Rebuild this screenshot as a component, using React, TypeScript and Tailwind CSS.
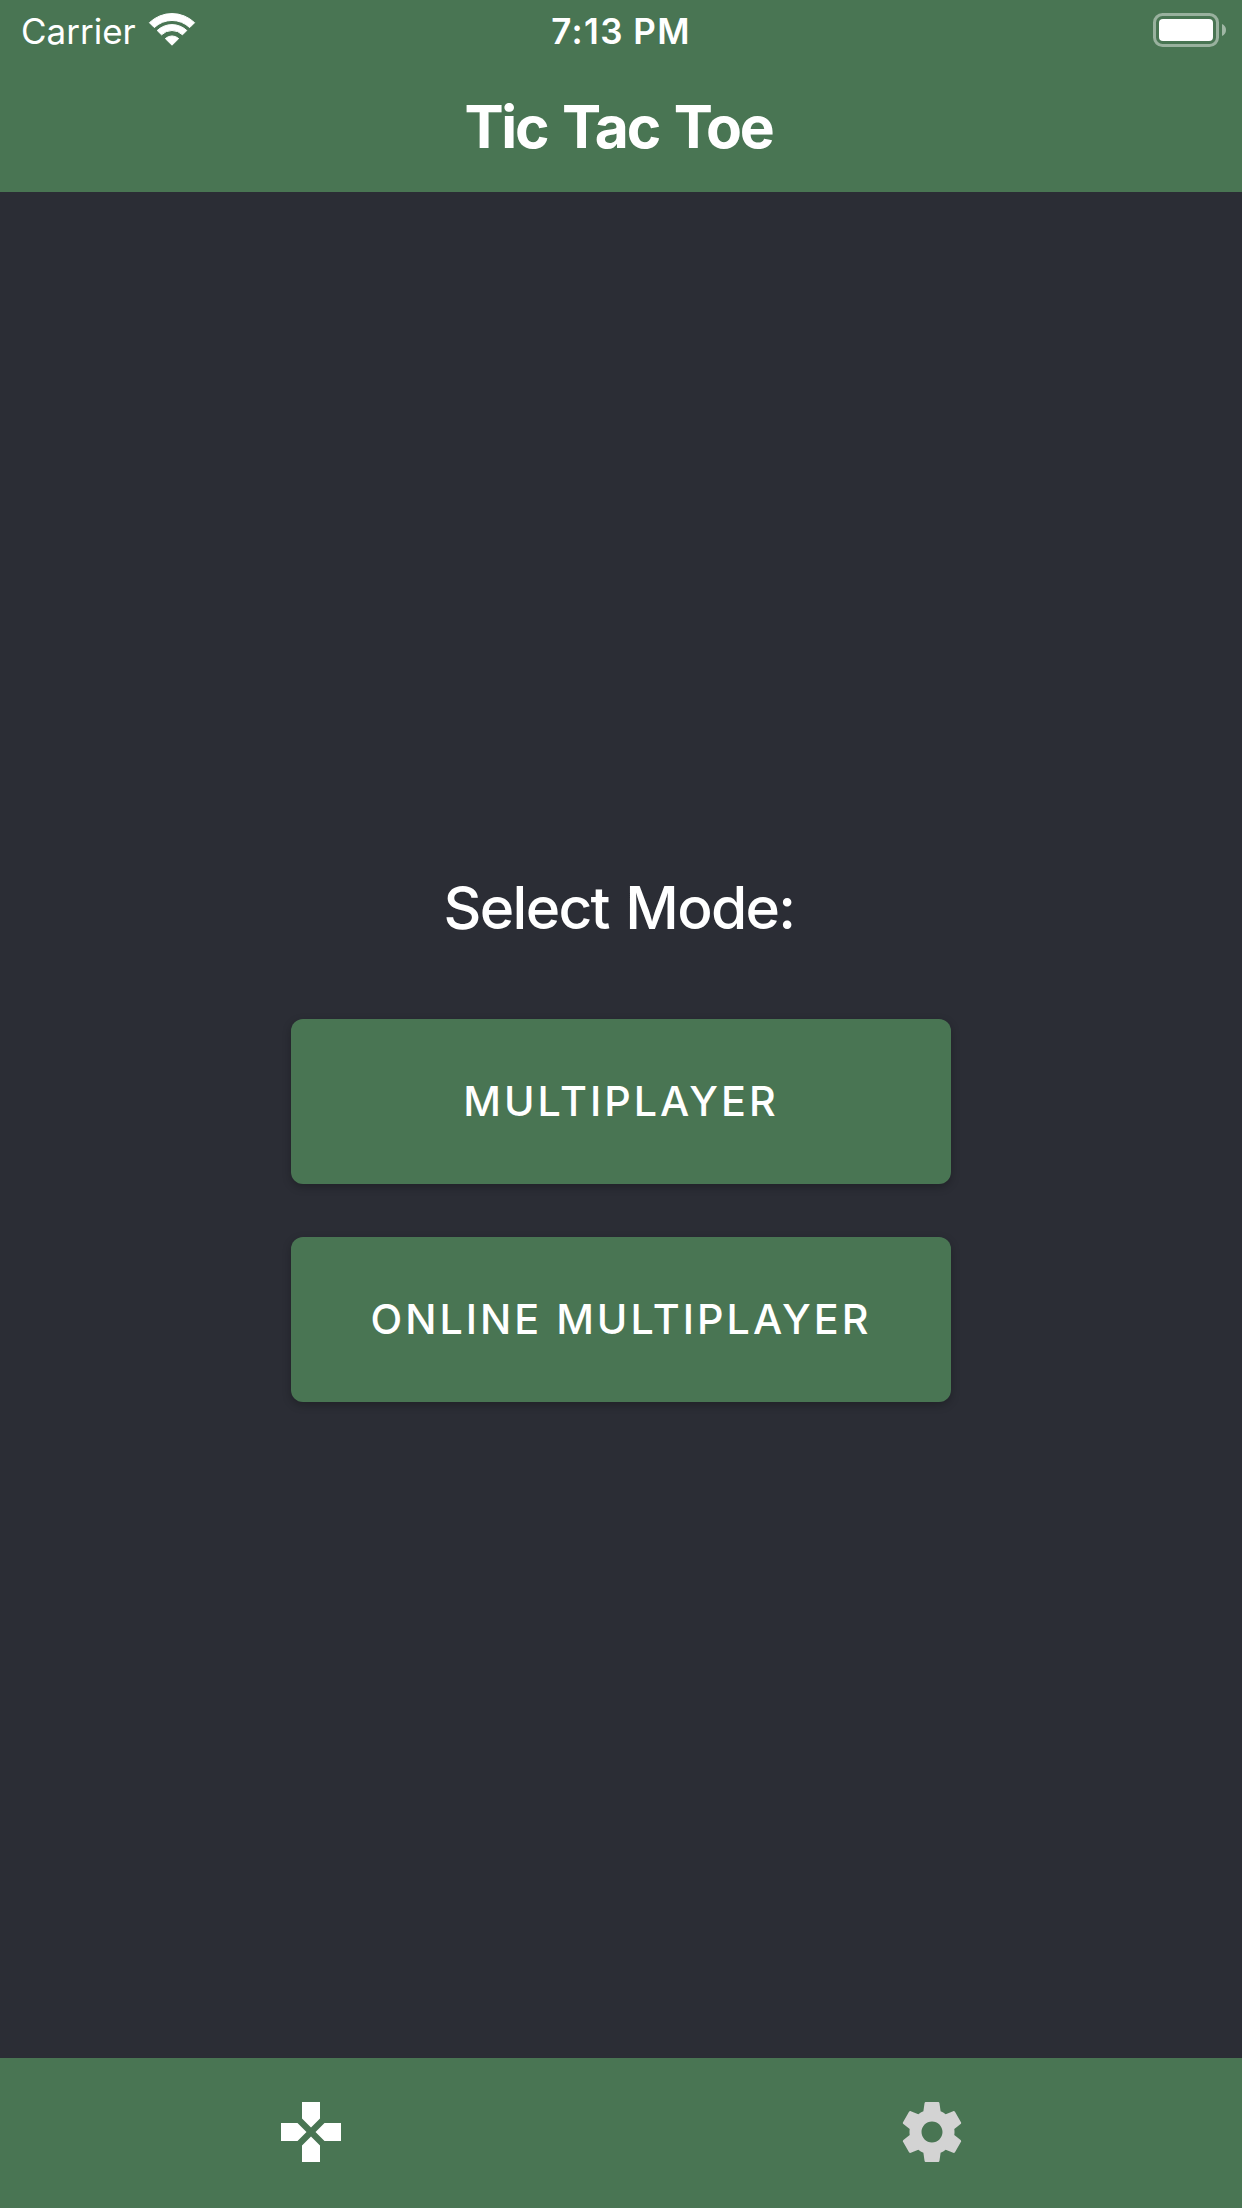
function WifiIcon() {
  return (
    <svg className="h-[35px] w-[48px]" viewBox="0 0 48 35" fill="#fff" stroke="#fff" strokeWidth="1" strokeLinejoin="round">
      <path d="M1.4 10.7A32.5 32.5 0 0 1 46.6 10.7L41.7 15.6A25.5 25.5 0 0 0 6.3 15.6Z" />
      <path d="M9.2 18.5A21.5 21.5 0 0 1 38.8 18.5L34.5 22.8A15 15 0 0 0 13.5 22.8Z" />
      <path d="M17.3 26.6A9.8 9.8 0 0 1 30.7 26.6L24 33.2Z" />
    </svg>
  );
}

function BatteryIcon() {
  return (
    <svg className="h-[34px] w-[74px]" viewBox="0 0 74 34">
      <rect x="1.5" y="1.5" width="63" height="31" rx="8" fill="none" stroke="#fff" strokeOpacity=".44" strokeWidth="3" />
      <rect x="6" y="6" width="54" height="22" rx="4" fill="#fff" />
      <path d="M69 11Q73 12.8 73 17Q73 21.2 69 23Z" fill="#fff" fillOpacity=".48" />
    </svg>
  );
}

function GamepadIcon() {
  return (
    <svg className="size-[72px] fill-white" viewBox="0 0 24 24">
      <path d="M15 7.5V2H9v5.5l3 3 3-3zM7.5 9H2v6h5.5l3-3-3-3zM9 16.5V22h6v-5.5l-3-3-3 3zM16.5 9l-3 3 3 3H22V9h-5.5z" />
    </svg>
  );
}

function SettingsIcon() {
  return (
    <svg className="size-[72px] fill-[#d3d3d3]" viewBox="0 0 24 24">
      <path d="M19.43 12.98c.04-.32.07-.64.07-.98s-.03-.66-.07-.98l2.11-1.65c.19-.15.24-.42.12-.64l-2-3.46c-.12-.22-.39-.3-.61-.22l-2.49 1c-.52-.4-1.08-.73-1.69-.98l-.38-2.65C14.46 2.18 14.25 2 14 2h-4c-.25 0-.46.18-.49.42l-.38 2.65c-.61.25-1.17.59-1.69.98l-2.49-1c-.23-.09-.49 0-.61.22l-2 3.46c-.13.22-.07.49.12.64l2.11 1.65c-.04.32-.07.65-.07.98s.03.66.07.98l-2.11 1.65c-.19.15-.24.42-.12.64l2 3.46c.12.22.39.3.61.22l2.49-1c.52.4 1.08.73 1.69.98l.38 2.65c.03.24.24.42.49.42h4c.25 0 .46-.18.49-.42l.38-2.65c.61-.25 1.17-.59 1.69-.98l2.49 1c.23.09.49 0 .61-.22l2-3.46c.12-.22.07-.49-.12-.64l-2.11-1.65zM12 15.5c-1.93 0-3.5-1.57-3.5-3.5s1.57-3.5 3.5-3.5 3.5 1.57 3.5 3.5-1.57 3.5-3.5 3.5z" />
    </svg>
  );
}

function ModeButton({ label }: { label: string }) {
  return (
    <button className="flex h-[165px] w-[660px] items-center justify-center rounded-xl bg-[#497553] pb-[2px] text-[41.3px] leading-[50px] font-medium tracking-[3px] shadow-[0_3px_9px_rgba(0,0,0,0.25)]">
      {label}
    </button>
  );
}

export default function App() {
  return (
    <div className="flex h-[2208px] w-[1242px] flex-col bg-[#2b2d35] font-['Inter',sans-serif] text-white">
      <header className="h-48 bg-[#497553]">
        <div className="grid h-[60px] grid-cols-3 text-[35px] leading-[42px]">
          <div className="flex items-start pt-[10px] pl-[21px]">
            <span>Carrier</span>
            <span className="mt-[2px] ml-[12px]">
              <WifiIcon />
            </span>
          </div>
          <div className="pt-[10px] text-center font-semibold tracking-[1.4px] [word-spacing:-1px]">7:13 PM</div>
          <div className="flex items-start justify-end pt-[13px] pr-[15px]">
            <BatteryIcon />
          </div>
        </div>
        <h1 className="pt-[31px] pr-[5px] text-center text-[58.7px] leading-[71px] font-bold tracking-[-2.2px] [word-spacing:3px]">Tic Tac Toe</h1>
      </header>

      <main className="flex flex-1 flex-col items-center pt-[680px]">
        <h2 className="pr-1 text-[58.7px] leading-[71px] font-medium tracking-[-1.7px] [word-spacing:2.5px]">Select Mode:</h2>
        <div className="mt-[76px] flex flex-col gap-[53px]">
          <ModeButton label="MULTIPLAYER" />
          <ModeButton label="ONLINE MULTIPLAYER" />
        </div>
      </main>

      <nav className="grid h-[150px] grid-cols-2 bg-[#497553]">
        <button className="flex items-start justify-center pt-[38px]" aria-label="Play">
          <GamepadIcon />
        </button>
        <button className="flex items-start justify-center pt-[38px]" aria-label="Settings">
          <SettingsIcon />
        </button>
      </nav>
    </div>
  );
}
